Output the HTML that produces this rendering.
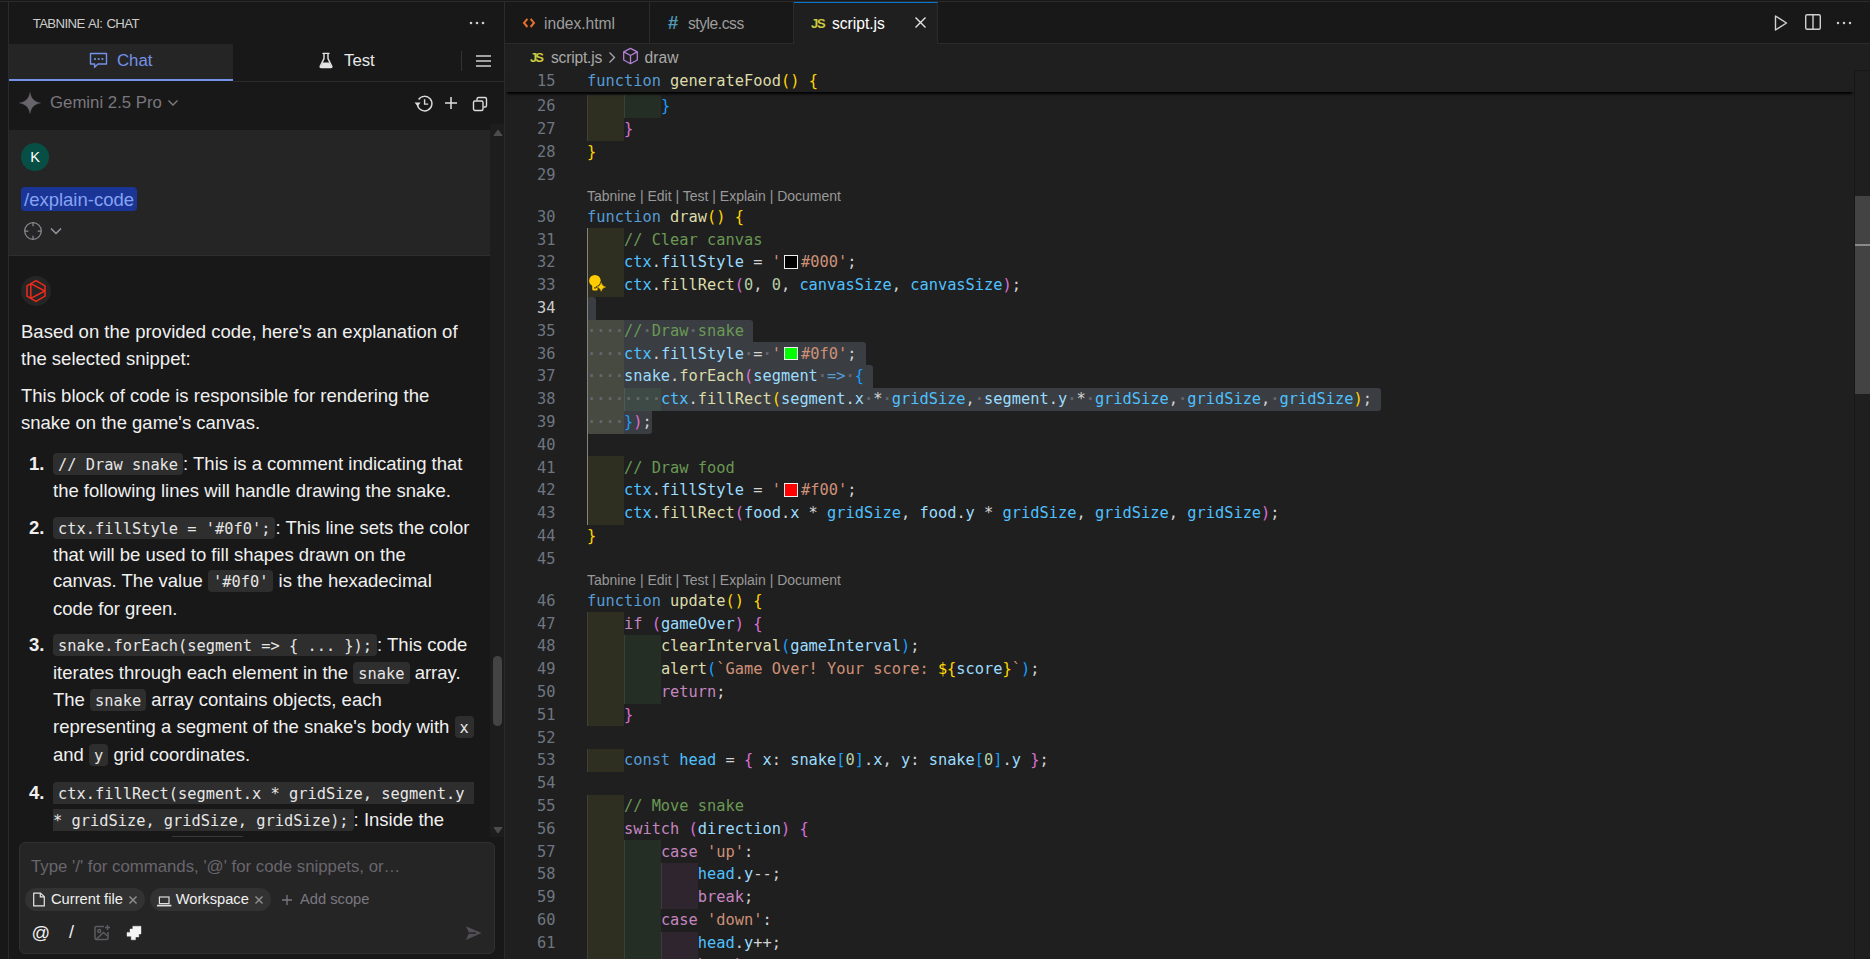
<!DOCTYPE html>
<html lang="en">
<head>
<meta charset="utf-8">
<title>script.js - Tabnine AI Chat</title>
<style>
*{box-sizing:border-box;margin:0;padding:0}
html,body{width:1870px;height:959px;overflow:hidden;background:#181818}
body{position:relative;font-family:"Liberation Sans",sans-serif;color:#ccc}
.abs{position:absolute}
/* ---------- frame ---------- */
#topline{left:0;top:1px;width:1870px;height:1px;background:#2b2b2b}
#strip{left:0;top:2px;width:8px;height:957px;background:#181818}
#stripb{left:8px;top:2px;width:1px;height:957px;background:#2b2b2b}
#side{left:9px;top:2px;width:495px;height:957px;background:#181818}
#sideb{left:504px;top:2px;width:1px;height:957px;background:#2b2b2b}
/* ---------- side header ---------- */
#ttl{left:32.7px;top:16px;font-size:13.2px;line-height:16px;color:#ccc;letter-spacing:-0.6px;word-spacing:1px;white-space:pre}
/* tabs */
#chattab{left:9px;top:44px;width:224px;height:35px;background:#252526}
#chatul{left:9px;top:78.8px;width:224px;height:2.4px;background:#7591e8}
#tabline{left:233px;top:81px;width:271px;height:1px;background:#2b2b2b}
.tabtx{font-size:16.8px;line-height:20px;white-space:pre}
#vsep{left:461px;top:51px;width:1px;height:20px;background:#333}
/* model row */
#model{left:50px;top:93px;font-size:16.8px;line-height:20px;color:#7a777e;white-space:pre}
/* user msg */
#umsg{left:9px;top:130px;width:481px;height:125px;background:#252526}
#umsgb{left:9px;top:255px;width:481px;height:1px;background:#2e2e2e}
#avatar{left:21px;top:143px;width:28px;height:28px;border-radius:50%;background:#074f44;color:#fff;font-size:14.6px;line-height:28px;text-align:center}
#cmd{left:21px;top:187px;width:116px;height:24px;border-radius:4px;background:#1a3596}
#cmdt{left:24px;top:188px;font-size:18.5px;line-height:24px;color:#86a3f3;white-space:pre}
/* bot msg */
#boticon{left:21px;top:276px;width:30px;height:30px;border-radius:50%;background:#252526}
.tx{position:absolute;font-size:18.5px;line-height:27px;color:#f0f0f0;white-space:pre;height:27px}
.tx b{font-weight:700}
.tx code{font-family:"DejaVu Sans Mono","Liberation Mono",monospace;font-size:15.35px;background:#2e2e2e;border-radius:4px;padding:2.6px 5px 1.4px 5px;color:#e6e6e6;letter-spacing:0}
/* chat scrollbar */
#csb{left:490px;top:124px;width:14px;height:713px;background:#1d1d1d}
#cthumb{left:493px;top:655.5px;width:9px;height:70px;border-radius:4.5px;background:#444}
/* input */
#inp{left:19px;top:842px;width:476px;height:112px;border:1px solid #303030;border-radius:6px;background:#252526}
#ph{left:31px;top:857px;font-size:16.8px;line-height:20px;color:#69666d;white-space:pre}
.chip{position:absolute;top:887.7px;height:23.4px;border-radius:12px;background:#323232}
.chiptx{position:absolute;font-size:14.7px;line-height:18px;color:#f0f0f0;white-space:pre;top:890.3px}
/* ---------- editor ---------- */
#edbg{left:505px;top:2px;width:1365px;height:957px;background:#1f1f1f}
#tabbar{left:505px;top:2px;width:1365px;height:42px;background:#181818}
#tabbarb{left:505px;top:43px;width:1365px;height:1px;background:#2b2b2b}
.tab{position:absolute;top:2px;height:41px;border-right:1px solid #2b2b2b;background:#181818}
.tab.on{background:#1f1f1f;border-top:1px solid #0078d4;height:42px}
.tabl{position:absolute;font-family:"Liberation Sans",sans-serif;font-size:15.6px;line-height:20px;white-space:pre;top:14px}
#bc{left:505px;top:44px;width:1349px;height:25px;background:#1f1f1f}
.bct{position:absolute;font-size:15.6px;line-height:20px;color:#a9a9a9;white-space:pre;top:48px}
#sticky{left:505px;top:69px;width:1349px;height:23.4px;background:#1f1f1f;z-index:5;box-shadow:0 4.8px 2.4px -2.4px #000}
#stickysh{left:505px;top:92px;width:1349px;height:3px;background:linear-gradient(#000,#0a0a0a 50%,rgba(0,0,0,0));z-index:5}
.ln{position:absolute;left:505px;width:50.5px;text-align:right;font-family:"DejaVu Sans Mono","Liberation Mono",monospace;font-size:15.35px;line-height:22.8px;height:22.8px;color:#6e7681;white-space:pre;letter-spacing:-0.004px}
.ln.act{color:#ccc}
.cl{position:absolute;left:587px;font-family:"DejaVu Sans Mono","Liberation Mono",monospace;font-size:15.35px;line-height:22.8px;height:22.8px;white-space:pre;color:#d4d4d4;letter-spacing:-0.004px}
.ir{position:absolute;width:37px;height:22.8px;border-left:1px solid rgba(255,255,255,.09)}
.k{color:#569cd6}.f{color:#dcdcaa}.v{color:#9cdcfe}.c{color:#4fc1ff}.s{color:#ce9178}.n{color:#b5cea8}
.m{color:#6a9955}.p{color:#c586c0}.o{color:#d4d4d4}.b1{color:#ffd700}.b2{color:#da70d6}.b3{color:#179fff}
.ws{color:#63666a;font-weight:700}
.sw{display:inline-block;width:13.4px;height:13.4px;border:1.6px solid #eee;margin:0 3.4px 0 3.4px;vertical-align:-1.5px}
.lens{position:absolute;left:587px;font-family:"Liberation Sans",sans-serif;font-size:14px;line-height:19.2px;height:19.2px;color:#999;white-space:pre}
.sel{position:absolute;background:#3a3d41;height:22.8px}
#guide{left:587px;top:228px;width:1px;height:297px;background:#84847a}
.gd{position:absolute;width:1px;background:#404040;left:587px}
/* editor scrollbar */
#vsb{left:1854px;top:70px;width:16px;height:889px;background:#1f1f1f;border-left:1px solid #171717;border-top:1px solid #171717}
#vthumb{left:1855px;top:196px;width:15px;height:198px;background:#434343}
#vmark{left:1855px;top:244px;width:15px;height:2px;background:#8a8a8a}
</style>
</head>
<body>
<div class="abs" id="topline"></div>
<div class="abs" id="strip"></div><div class="abs" id="stripb"></div>
<div class="abs" id="side"></div><div class="abs" id="sideb"></div>

<!-- ===== side panel header ===== -->
<div class="abs" id="ttl">TABNINE AI: CHAT</div>
<svg class="abs" style="left:468px;top:15px" width="18" height="16" viewBox="0 0 18 16"><circle cx="3" cy="8" r="1.3" fill="#ccc"/><circle cx="9" cy="8" r="1.3" fill="#ccc"/><circle cx="15" cy="8" r="1.3" fill="#ccc"/></svg>

<div class="abs" id="chattab"></div><div class="abs" id="chatul"></div><div class="abs" id="tabline"></div>
<svg class="abs" style="left:89px;top:52px" width="20" height="18" viewBox="0 0 20 18"><path d="M1.5 1.5h16v10.5h-8.5l-3.4 3.3v-3.3h-4.1z" fill="none" stroke="#7591e8" stroke-width="1.4" stroke-linejoin="round"/><circle cx="6" cy="7" r="1.1" fill="#7591e8"/><circle cx="9.7" cy="7" r="1.1" fill="#7591e8"/><circle cx="13.4" cy="7" r="1.1" fill="#7591e8"/></svg>
<div class="abs tabtx" id="chatt" style="left:117px;top:51px;color:#7591e8">Chat</div>
<svg class="abs" style="left:318px;top:52px" width="16" height="17" viewBox="0 0 16 18" preserveAspectRatio="none"><path d="M5 1.5h6M6 1.5v5.5L2.2 15q-.5 1.5 1 1.5h9.6q1.5 0 1-1.5L10 7V1.5" fill="none" stroke="#e4e4e4" stroke-width="1.4" stroke-linejoin="round" stroke-linecap="round"/><path d="M4.6 11h6.8l2.2 5H2.4z" fill="#e4e4e4"/></svg>
<div class="abs tabtx" id="testt" style="left:344px;top:51px;color:#e8e8e8">Test</div>
<div class="abs" id="vsep"></div>
<svg class="abs" style="left:475px;top:54px" width="17" height="14" viewBox="0 0 17 14"><path d="M1 2h15M1 7h15M1 12h15" stroke="#d0d0d0" stroke-width="1.4" fill="none"/></svg>

<!-- model row -->
<svg class="abs" style="left:18.6px;top:92px" width="22" height="22" viewBox="0 0 22 22"><path d="M11 .3C12.1 6.7 15.3 9.9 21.7 11C15.3 12.1 12.1 15.3 11 21.7C9.900 15.3 6.7 12.1 .3 11C6.7 9.900 9.900 6.7 11 .3Z" fill="#67646c" stroke="#67646c" stroke-width=".3"/></svg>
<div class="abs" id="model">Gemini 2.5 Pro</div>
<svg class="abs" style="left:167px;top:98px" width="12" height="10" viewBox="0 0 12 10"><path d="M1.5 2.5L6 7l4.5-4.5" fill="none" stroke="#7d7d7d" stroke-width="1.4"/></svg>
<svg class="abs" style="left:414px;top:93.5px" width="21" height="20" viewBox="0 0 21 20"><path d="M4.6 5.5A7.3 7.3 0 1 1 3.5 11.2" fill="none" stroke="#dcdcdc" stroke-width="1.4"/><path d="M.6 8.4L3.6 12.4L6.6 8.6z" fill="#dcdcdc"/><path d="M10.6 5.3V10.1h3.6" fill="none" stroke="#dcdcdc" stroke-width="1.4"/></svg>
<svg class="abs" style="left:444px;top:96px" width="14" height="14" viewBox="0 0 14 14"><path d="M7 1v12M1 7h12" stroke="#e0e0e0" stroke-width="1.5" fill="none"/></svg>
<svg class="abs" style="left:472px;top:95.5px" width="17" height="16" viewBox="0 0 17 16"><rect x="1.5" y="5" width="9.5" height="9.5" rx="1.5" fill="none" stroke="#dcdcdc" stroke-width="1.4"/><path d="M5 4.5V3q0-1.5 1.5-1.5H13q1.5 0 1.5 1.5v6.5q0 1.5-1.5 1.5h-1.5" fill="none" stroke="#dcdcdc" stroke-width="1.4"/></svg>

<!-- user message -->
<div class="abs" id="umsg"></div><div class="abs" id="umsgb"></div>
<div class="abs" id="avatar">K</div>
<div class="abs" id="cmd"></div><div class="abs" id="cmdt">/explain-code</div>
<svg class="abs" style="left:22.8px;top:221px" width="20" height="20" viewBox="0 0 20 20"><circle cx="10" cy="10" r="8.3" fill="none" stroke="#8b8790" stroke-width="1.25"/><path d="M10 1.7v3.6M10 14.7v3.6M1.7 10h3.6M14.7 10h3.6" stroke="#8b8790" stroke-width="1.25"/></svg>
<svg class="abs" style="left:49px;top:226px" width="14" height="10" viewBox="0 0 14 10"><path d="M2 2.5L7 7.5l5-5" fill="none" stroke="#9a979e" stroke-width="1.5"/></svg>

<!-- bot message -->
<div class="abs" id="boticon"></div>
<svg class="abs" style="left:24px;top:279px" width="24" height="24" viewBox="0 0 24 24"><path d="M12 1.6L21 6.8V17.2L12 22.4L3 17.2V6.8Z" fill="none" stroke="#ee2a1b" stroke-width="1.5" stroke-linejoin="round"/><path d="M6.8 4.7V19.3L20.8 12Z" fill="none" stroke="#ee2a1b" stroke-width="1.5" stroke-linejoin="round"/></svg>

<div class="tx" style="left:21px;top:318px">Based on the provided code, here's an explanation of</div>
<div class="tx" style="left:21px;top:345px">the selected snippet:</div>
<div class="tx" style="left:21px;top:382px">This block of code is responsible for rendering the</div>
<div class="tx" style="left:21px;top:409px">snake on the game's canvas.</div>

<div class="tx" style="left:29px;top:450px"><b>1.</b></div>
<div class="tx" style="left:53px;top:450px"><code>// Draw snake</code>: This is a comment indicating that</div>
<div class="tx" style="left:53px;top:477px">the following lines will handle drawing the snake.</div>

<div class="tx" style="left:29px;top:514px"><b>2.</b></div>
<div class="tx" style="left:53px;top:514px"><code>ctx.fillStyle = '#0f0';</code>: This line sets the color</div>
<div class="tx" style="left:53px;top:541px">that will be used to fill shapes drawn on the</div>
<div class="tx" style="left:53px;top:567px">canvas. The value <code>'#0f0'</code> is the hexadecimal</div>
<div class="tx" style="left:53px;top:595px">code for green.</div>

<div class="tx" style="left:29px;top:631px"><b>3.</b></div>
<div class="tx" style="left:53px;top:631px"><code>snake.forEach(segment =&gt; { ... });</code>: This code</div>
<div class="tx" style="left:53px;top:659px">iterates through each element in the <code>snake</code> array.</div>
<div class="tx" style="left:53px;top:686px">The <code>snake</code> array contains objects, each</div>
<div class="tx" style="left:53px;top:713px">representing a segment of the snake's body with <code>x</code></div>
<div class="tx" style="left:53px;top:741px">and <code>y</code> grid coordinates.</div>

<div class="tx" style="left:29px;top:779px"><b>4.</b></div>
<div class="tx" style="left:53px;top:779px"><code style="border-radius:4px 0 0 0;padding-right:0">ctx.fillRect(segment.x * gridSize, segment.y </code></div>
<div class="tx" style="left:53px;top:806px"><code style="border-radius:0 0 4px 0;padding-left:0">* gridSize, gridSize, gridSize);</code>: Inside the</div>

<!-- mask below chat scroll area -->
<div class="abs" style="left:9px;top:833px;width:481px;height:126px;background:#181818"></div>
<div class="abs" style="left:172px;top:836px;width:71px;height:1px;background:#3a3a3a"></div>

<!-- chat scrollbar -->
<div class="abs" id="csb"></div>
<div class="abs" id="cthumb"></div>
<svg class="abs" style="left:492.5px;top:129px" width="10" height="8" viewBox="0 0 10 8"><path d="M5 1L9 6.5H1z" fill="#4c4c4c" stroke="#4c4c4c" stroke-width="1" stroke-linejoin="round"/></svg>
<svg class="abs" style="left:492.5px;top:825.5px" width="10" height="8" viewBox="0 0 10 8"><path d="M5 7L9 1.5H1z" fill="#4c4c4c" stroke="#4c4c4c" stroke-width="1" stroke-linejoin="round"/></svg>

<!-- input box -->
<div class="abs" id="inp"></div>
<div class="abs" id="ph">Type '/' for commands, '@' for code snippets, or…</div>
<div class="chip" style="left:25px;width:119.7px"></div>
<svg class="abs" style="left:32px;top:892px" width="14" height="15" viewBox="0 0 14 16" preserveAspectRatio="none"><path d="M1.7 1.2h6.8l3.8 3.8v9.8H1.7z" fill="none" stroke="#e6e6e6" stroke-width="1.2" stroke-linejoin="round"/><path d="M8.3 1.4v3.8h3.8" fill="none" stroke="#e6e6e6" stroke-width="1.2"/></svg>
<div class="chiptx" style="left:51px">Current file</div>
<svg class="abs" style="left:128px;top:895px" width="10" height="10" viewBox="0 0 10 10"><path d="M1.5 1.5l7 7M8.5 1.5l-7 7" stroke="#8c8c8c" stroke-width="1.5" fill="none"/></svg>
<div class="chip" style="left:149.5px;width:121.5px"></div>
<svg class="abs" style="left:155.5px;top:893.5px" width="17" height="14" viewBox="0 0 17 14"><rect x="3.4" y="3" width="9.6" height="6.6" fill="none" stroke="#dedede" stroke-width="1.2"/><path d="M1 11.6h14.4" stroke="#dedede" stroke-width="1.7" fill="none"/></svg>
<div class="chiptx" style="left:175.7px">Workspace</div>
<svg class="abs" style="left:254px;top:895px" width="10" height="10" viewBox="0 0 10 10"><path d="M1.5 1.5l7 7M8.5 1.5l-7 7" stroke="#8c8c8c" stroke-width="1.5" fill="none"/></svg>
<svg class="abs" style="left:281px;top:894px" width="12" height="12" viewBox="0 0 12 12"><path d="M6 1v10M1 6h10" stroke="#7b7880" stroke-width="1.3" fill="none"/></svg>
<div class="chiptx" style="left:300px;color:#7b7880">Add scope</div>

<div class="abs" style="left:31.5px;top:920px;font-size:18.3px;line-height:26px;color:#f0f0f0">@</div>
<div class="abs" style="left:69px;top:920px;font-size:18px;line-height:24px;color:#f0f0f0">/</div>
<svg class="abs" style="left:93px;top:924px" width="18" height="18" viewBox="0 0 18 18"><path d="M11 2.5H3.5q-1.5 0-1.5 1.5v10q0 1.5 1.5 1.5h10q1.5 0 1.5-1.5V8" fill="none" stroke="#5e5b62" stroke-width="1.5"/><circle cx="6.2" cy="7" r="1.5" fill="none" stroke="#5e5b62" stroke-width="1.4"/><path d="M3.5 15l7-6.5 4 3.5" fill="none" stroke="#5e5b62" stroke-width="1.5"/><path d="M14.5 1v5M12 3.5h5" stroke="#5e5b62" stroke-width="1.5"/></svg>
<svg class="abs" style="left:126px;top:925px" width="17" height="16" viewBox="0 0 17 16"><path d="M6.8 1.2h8.2v7.8h-2.2v3H9.5v2.8H5.2v-3.5H1V7.4h3V4h2.8z" fill="#f4f4f4" stroke="#f4f4f4" stroke-width=".4" stroke-linejoin="round"/></svg>
<svg class="abs" style="left:465px;top:925px" width="18" height="16" viewBox="0 0 18 16"><path d="M.8 1.2L16.6 8.1L.8 15L4.2 8.1z" fill="#514f55"/><path d="M4.2 8.1H11" stroke="#252526" stroke-width="1.5"/></svg>

<!-- ===== editor ===== -->
<div class="abs" id="edbg"></div>
<div class="abs" id="tabbar"></div><div class="abs" id="tabbarb"></div>
<div class="tab" style="left:505px;width:145px"></div>
<div class="tab" style="left:650px;width:144px"></div>
<div class="tab on" style="left:794px;width:144px"></div>
<svg class="abs" style="left:522px;top:16px" width="14" height="14" viewBox="0 0 14 14"><path d="M5.4 2.8L2 6.9l3.4 4.1M8.6 2.8L12 6.9l-3.4 4.1" fill="none" stroke="#e8702a" stroke-width="2"/></svg>
<div class="tabl" style="left:544px;color:#9d9d9d">index.html</div>
<div class="tabl" style="left:668px;color:#519aba;font-weight:700;font-size:18.5px;top:13px">#</div>
<div class="tabl" style="left:688px;color:#9d9d9d;letter-spacing:-0.45px">style.css</div>
<div class="tabl" style="left:811px;color:#cbcb41;font-weight:700;font-size:13px;letter-spacing:-1.2px;top:13.5px">JS</div>
<div class="tabl" style="left:832px;color:#fff">script.js</div>
<svg class="abs" style="left:914px;top:16px" width="13" height="13" viewBox="0 0 13 13"><path d="M1.5 1.5l10 10M11.5 1.5l-10 10" stroke="#e6e6e6" stroke-width="1.4" fill="none"/></svg>
<!-- editor actions -->
<svg class="abs" style="left:1773px;top:14px" width="16" height="18" viewBox="0 0 16 18"><path d="M2.5 2L13.5 9L2.5 16Z" fill="none" stroke="#d0d0d0" stroke-width="1.4" stroke-linejoin="round"/></svg>
<svg class="abs" style="left:1804px;top:13px" width="18" height="18" viewBox="0 0 18 18"><rect x="1.7" y="1.7" width="14.6" height="14.6" rx="1.5" fill="none" stroke="#d0d0d0" stroke-width="1.4"/><path d="M9 1.7v14.6" stroke="#d0d0d0" stroke-width="1.4"/></svg>
<svg class="abs" style="left:1834.5px;top:14.5px" width="18" height="16" viewBox="0 0 18 16"><circle cx="3" cy="8" r="1.25" fill="#ccc"/><circle cx="9" cy="8" r="1.25" fill="#ccc"/><circle cx="15" cy="8" r="1.25" fill="#ccc"/></svg>

<!-- breadcrumbs -->
<div class="abs" id="bc"></div>
<div class="bct" style="left:530px;color:#cbcb41;font-weight:700;font-size:13px;letter-spacing:-1.9px;top:47.5px">JS</div>
<div class="bct" style="left:551px;letter-spacing:-0.2px">script.js</div>
<svg class="abs" style="left:607px;top:51px" width="10" height="13" viewBox="0 0 10 13"><path d="M2.5 1.5L7.5 6.5l-5 5" fill="none" stroke="#a9a9a9" stroke-width="1.3"/></svg>
<svg class="abs" style="left:622.3px;top:47.3px" width="17" height="18" viewBox="0 0 17 18"><path d="M8.5 1.3L15.3 4.8V13L8.5 16.7L1.7 13V4.8Z M1.9 4.9L8.5 8.5L15.1 4.9M8.5 8.5v8" fill="none" stroke="#b180d7" stroke-width="1.3" stroke-linejoin="round"/></svg>
<div class="bct" style="left:644.6px">draw</div>

<!-- code -->
<div class="sel" style="top:296.8px;left:587px;width:9.2px;border-radius:3px 3px 0px 0px"></div>
<div class="sel" style="top:319.6px;left:587px;width:166.3px;border-radius:0px 3px 0px 0px"></div>
<div class="sel" style="top:342.4px;left:587px;width:278.8px;border-radius:0px 3px 0px 0px"></div>
<div class="sel" style="top:365.2px;left:587px;width:286.3px;border-radius:0px 3px 0px 0px"></div>
<div class="sel" style="top:388.0px;left:587px;width:794.3px;border-radius:0px 3px 3px 0px"></div>
<div class="sel" style="top:410.8px;left:587px;width:64.7px;border-radius:0px 0px 3px 3px"></div>
<div class="ir" style="top:95.2px;left:587px;background:rgba(255,255,64,0.07)"></div>
<div class="ir" style="top:95.2px;left:624px;background:rgba(127,255,127,0.07)"></div>
<div class="ir" style="top:118.0px;left:587px;background:rgba(255,255,64,0.07)"></div>
<div class="ir" style="top:228.4px;left:587px;background:rgba(255,255,64,0.07)"></div>
<div class="ir" style="top:251.2px;left:587px;background:rgba(255,255,64,0.07)"></div>
<div class="ir" style="top:274.0px;left:587px;background:rgba(255,255,64,0.07)"></div>
<div class="ir" style="top:319.6px;left:587px;background:rgba(255,255,64,0.07)"></div>
<div class="ir" style="top:342.4px;left:587px;background:rgba(255,255,64,0.07)"></div>
<div class="ir" style="top:365.2px;left:587px;background:rgba(255,255,64,0.07)"></div>
<div class="ir" style="top:388.0px;left:587px;background:rgba(255,255,64,0.07)"></div>
<div class="ir" style="top:388.0px;left:624px;background:rgba(127,255,127,0.07)"></div>
<div class="ir" style="top:410.8px;left:587px;background:rgba(255,255,64,0.07)"></div>
<div class="ir" style="top:456.4px;left:587px;background:rgba(255,255,64,0.07)"></div>
<div class="ir" style="top:479.2px;left:587px;background:rgba(255,255,64,0.07)"></div>
<div class="ir" style="top:502.0px;left:587px;background:rgba(255,255,64,0.07)"></div>
<div class="ir" style="top:612.4px;left:587px;background:rgba(255,255,64,0.07)"></div>
<div class="ir" style="top:635.2px;left:587px;background:rgba(255,255,64,0.07)"></div>
<div class="ir" style="top:635.2px;left:624px;background:rgba(127,255,127,0.07)"></div>
<div class="ir" style="top:658.0px;left:587px;background:rgba(255,255,64,0.07)"></div>
<div class="ir" style="top:658.0px;left:624px;background:rgba(127,255,127,0.07)"></div>
<div class="ir" style="top:680.8px;left:587px;background:rgba(255,255,64,0.07)"></div>
<div class="ir" style="top:680.8px;left:624px;background:rgba(127,255,127,0.07)"></div>
<div class="ir" style="top:703.6px;left:587px;background:rgba(255,255,64,0.07)"></div>
<div class="ir" style="top:749.2px;left:587px;background:rgba(255,255,64,0.07)"></div>
<div class="ir" style="top:794.8px;left:587px;background:rgba(255,255,64,0.07)"></div>
<div class="ir" style="top:817.6px;left:587px;background:rgba(255,255,64,0.07)"></div>
<div class="ir" style="top:840.4px;left:587px;background:rgba(255,255,64,0.07)"></div>
<div class="ir" style="top:840.4px;left:624px;background:rgba(127,255,127,0.07)"></div>
<div class="ir" style="top:863.2px;left:587px;background:rgba(255,255,64,0.07)"></div>
<div class="ir" style="top:863.2px;left:624px;background:rgba(127,255,127,0.07)"></div>
<div class="ir" style="top:863.2px;left:661px;background:rgba(255,127,255,0.07)"></div>
<div class="ir" style="top:886.0px;left:587px;background:rgba(255,255,64,0.07)"></div>
<div class="ir" style="top:886.0px;left:624px;background:rgba(127,255,127,0.07)"></div>
<div class="ir" style="top:886.0px;left:661px;background:rgba(255,127,255,0.07)"></div>
<div class="ir" style="top:908.8px;left:587px;background:rgba(255,255,64,0.07)"></div>
<div class="ir" style="top:908.8px;left:624px;background:rgba(127,255,127,0.07)"></div>
<div class="ir" style="top:931.6px;left:587px;background:rgba(255,255,64,0.07)"></div>
<div class="ir" style="top:931.6px;left:624px;background:rgba(127,255,127,0.07)"></div>
<div class="ir" style="top:931.6px;left:661px;background:rgba(255,127,255,0.07)"></div>
<div class="ir" style="top:954.4px;left:587px;background:rgba(255,255,64,0.07)"></div>
<div class="ir" style="top:954.4px;left:624px;background:rgba(127,255,127,0.07)"></div>
<div class="ir" style="top:954.4px;left:661px;background:rgba(255,127,255,0.07)"></div>
<div class="ln" style="top:95.3px">26</div>
<div class="cl" style="top:95.3px"><span class="o">        </span><span class="b3">}</span></div>
<div class="ln" style="top:118.1px">27</div>
<div class="cl" style="top:118.1px"><span class="o">    </span><span class="b2">}</span></div>
<div class="ln" style="top:140.9px">28</div>
<div class="cl" style="top:140.9px"><span class="b1">}</span></div>
<div class="ln" style="top:163.7px">29</div>
<div class="ln" style="top:205.7px">30</div>
<div class="cl" style="top:205.7px"><span class="k">function</span><span class="o"> </span><span class="f">draw</span><span class="b1">()</span><span class="o"> </span><span class="b1">{</span></div>
<div class="ln" style="top:228.5px">31</div>
<div class="cl" style="top:228.5px"><span class="o">    </span><span class="m">// Clear canvas</span></div>
<div class="ln" style="top:251.3px">32</div>
<div class="cl" style="top:251.3px"><span class="o">    </span><span class="c">ctx</span><span class="o">.</span><span class="v">fillStyle</span><span class="o"> = </span><span class="s">&#x27;</span><i class="sw" style="background:#000000"></i><span class="s">#000&#x27;</span><span class="o">;</span></div>
<div class="ln" style="top:274.1px">33</div>
<div class="cl" style="top:274.1px"><span class="o">    </span><span class="c">ctx</span><span class="o">.</span><span class="f">fillRect</span><span class="b2">(</span><span class="n">0</span><span class="o">, </span><span class="n">0</span><span class="o">, </span><span class="c">canvasSize</span><span class="o">, </span><span class="c">canvasSize</span><span class="b2">)</span><span class="o">;</span></div>
<div class="ln act" style="top:296.9px">34</div>
<div class="ln" style="top:319.7px">35</div>
<div class="cl" style="top:319.7px"><span class="ws">····</span><span class="m">//</span><span class="ws">·</span><span class="m">Draw</span><span class="ws">·</span><span class="m">snake</span></div>
<div class="ln" style="top:342.5px">36</div>
<div class="cl" style="top:342.5px"><span class="ws">····</span><span class="c">ctx</span><span class="o">.</span><span class="v">fillStyle</span><span class="ws">·</span><span class="o">=</span><span class="ws">·</span><span class="s">&#x27;</span><i class="sw" style="background:#00ff00"></i><span class="s">#0f0&#x27;</span><span class="o">;</span></div>
<div class="ln" style="top:365.3px">37</div>
<div class="cl" style="top:365.3px"><span class="ws">····</span><span class="v">snake</span><span class="o">.</span><span class="f">forEach</span><span class="b2">(</span><span class="v">segment</span><span class="ws">·</span><span class="k">=&gt;</span><span class="ws">·</span><span class="b3">{</span></div>
<div class="ln" style="top:388.1px">38</div>
<div class="cl" style="top:388.1px"><span class="ws">········</span><span class="c">ctx</span><span class="o">.</span><span class="f">fillRect</span><span class="b1">(</span><span class="v">segment</span><span class="o">.</span><span class="v">x</span><span class="ws">·</span><span class="o">*</span><span class="ws">·</span><span class="c">gridSize</span><span class="o">,</span><span class="ws">·</span><span class="v">segment</span><span class="o">.</span><span class="v">y</span><span class="ws">·</span><span class="o">*</span><span class="ws">·</span><span class="c">gridSize</span><span class="o">,</span><span class="ws">·</span><span class="c">gridSize</span><span class="o">,</span><span class="ws">·</span><span class="c">gridSize</span><span class="b1">)</span><span class="o">;</span></div>
<div class="ln" style="top:410.9px">39</div>
<div class="cl" style="top:410.9px"><span class="ws">····</span><span class="b3">}</span><span class="b2">)</span><span class="o">;</span></div>
<div class="ln" style="top:433.7px">40</div>
<div class="ln" style="top:456.5px">41</div>
<div class="cl" style="top:456.5px"><span class="o">    </span><span class="m">// Draw food</span></div>
<div class="ln" style="top:479.3px">42</div>
<div class="cl" style="top:479.3px"><span class="o">    </span><span class="c">ctx</span><span class="o">.</span><span class="v">fillStyle</span><span class="o"> = </span><span class="s">&#x27;</span><i class="sw" style="background:#ff0000"></i><span class="s">#f00&#x27;</span><span class="o">;</span></div>
<div class="ln" style="top:502.1px">43</div>
<div class="cl" style="top:502.1px"><span class="o">    </span><span class="c">ctx</span><span class="o">.</span><span class="f">fillRect</span><span class="b2">(</span><span class="v">food</span><span class="o">.</span><span class="v">x</span><span class="o"> * </span><span class="c">gridSize</span><span class="o">, </span><span class="v">food</span><span class="o">.</span><span class="v">y</span><span class="o"> * </span><span class="c">gridSize</span><span class="o">, </span><span class="c">gridSize</span><span class="o">, </span><span class="c">gridSize</span><span class="b2">)</span><span class="o">;</span></div>
<div class="ln" style="top:524.9px">44</div>
<div class="cl" style="top:524.9px"><span class="b1">}</span></div>
<div class="ln" style="top:547.7px">45</div>
<div class="ln" style="top:589.7px">46</div>
<div class="cl" style="top:589.7px"><span class="k">function</span><span class="o"> </span><span class="f">update</span><span class="b1">()</span><span class="o"> </span><span class="b1">{</span></div>
<div class="ln" style="top:612.5px">47</div>
<div class="cl" style="top:612.5px"><span class="o">    </span><span class="p">if</span><span class="o"> </span><span class="b2">(</span><span class="v">gameOver</span><span class="b2">)</span><span class="o"> </span><span class="b2">{</span></div>
<div class="ln" style="top:635.3px">48</div>
<div class="cl" style="top:635.3px"><span class="o">        </span><span class="f">clearInterval</span><span class="b3">(</span><span class="v">gameInterval</span><span class="b3">)</span><span class="o">;</span></div>
<div class="ln" style="top:658.1px">49</div>
<div class="cl" style="top:658.1px"><span class="o">        </span><span class="f">alert</span><span class="b3">(</span><span class="s">`Game Over! Your score: </span><span class="b1">${</span><span class="v">score</span><span class="b1">}</span><span class="s">`</span><span class="b3">)</span><span class="o">;</span></div>
<div class="ln" style="top:680.9px">50</div>
<div class="cl" style="top:680.9px"><span class="o">        </span><span class="p">return</span><span class="o">;</span></div>
<div class="ln" style="top:703.7px">51</div>
<div class="cl" style="top:703.7px"><span class="o">    </span><span class="b2">}</span></div>
<div class="ln" style="top:726.5px">52</div>
<div class="ln" style="top:749.3px">53</div>
<div class="cl" style="top:749.3px"><span class="o">    </span><span class="k">const</span><span class="o"> </span><span class="c">head</span><span class="o"> = </span><span class="b2">{</span><span class="o"> </span><span class="v">x</span><span class="o">: </span><span class="v">snake</span><span class="b3">[</span><span class="n">0</span><span class="b3">]</span><span class="o">.</span><span class="v">x</span><span class="o">, </span><span class="v">y</span><span class="o">: </span><span class="v">snake</span><span class="b3">[</span><span class="n">0</span><span class="b3">]</span><span class="o">.</span><span class="v">y</span><span class="o"> </span><span class="b2">}</span><span class="o">;</span></div>
<div class="ln" style="top:772.1px">54</div>
<div class="ln" style="top:794.9px">55</div>
<div class="cl" style="top:794.9px"><span class="o">    </span><span class="m">// Move snake</span></div>
<div class="ln" style="top:817.7px">56</div>
<div class="cl" style="top:817.7px"><span class="o">    </span><span class="p">switch</span><span class="o"> </span><span class="b2">(</span><span class="v">direction</span><span class="b2">)</span><span class="o"> </span><span class="b2">{</span></div>
<div class="ln" style="top:840.5px">57</div>
<div class="cl" style="top:840.5px"><span class="o">        </span><span class="p">case</span><span class="o"> </span><span class="s">&#x27;up&#x27;</span><span class="o">:</span></div>
<div class="ln" style="top:863.3px">58</div>
<div class="cl" style="top:863.3px"><span class="o">            </span><span class="c">head</span><span class="o">.</span><span class="v">y</span><span class="o">--;</span></div>
<div class="ln" style="top:886.1px">59</div>
<div class="cl" style="top:886.1px"><span class="o">            </span><span class="p">break</span><span class="o">;</span></div>
<div class="ln" style="top:908.9px">60</div>
<div class="cl" style="top:908.9px"><span class="o">        </span><span class="p">case</span><span class="o"> </span><span class="s">&#x27;down&#x27;</span><span class="o">:</span></div>
<div class="ln" style="top:931.7px">61</div>
<div class="cl" style="top:931.7px"><span class="o">            </span><span class="c">head</span><span class="o">.</span><span class="v">y</span><span class="o">++;</span></div>
<div class="ln" style="top:954.5px">62</div>
<div class="cl" style="top:953.5px"><span class="o">            </span><span class="p">break</span><span class="o">;</span></div>
<div class="lens" style="top:187px">Tabnine | Edit | Test | Explain | Document</div>
<div class="lens" style="top:570.9px">Tabnine | Edit | Test | Explain | Document</div>
<div class="abs" id="guide"></div>

<!-- lightbulb -->
<svg class="abs" style="left:587px;top:274px" width="20" height="20" viewBox="0 0 20 20"><circle cx="7.9" cy="6.7" r="5.8" fill="#ffcc00"/><path d="M5.2 10.5h5.6v4.4q0 1.5-1.5 1.5H6.7q-1.5 0-1.5-1.5z" fill="#ffcc00"/><circle cx="8" cy="13.9" r=".8" fill="#2f2f21"/><path d="M14.2 8.7Q14.9 12.3 18.5 13Q14.9 13.7 14.2 17.3Q13.5 13.7 9.9 13Q13.5 12.3 14.2 8.7Z" fill="#2d2d20" stroke="#2d2d20" stroke-width="1.8" stroke-linejoin="round"/><path d="M14.2 8.7Q14.9 12.3 18.5 13Q14.9 13.7 14.2 17.3Q13.5 13.7 9.9 13Q13.5 12.3 14.2 8.7Z" fill="#ffcc00" stroke="#ffcc00" stroke-width=".5" stroke-linejoin="round"/></svg>

<!-- sticky scroll -->
<div class="abs" id="sticky"></div>
<div class="ln" style="top:70px;z-index:6">15</div>
<div class="cl" style="top:70px;z-index:6"><span class="k">function</span><span class="o"> </span><span class="f">generateFood</span><span class="b1">()</span><span class="o"> </span><span class="b1">{</span></div>

<!-- editor scrollbar -->
<div class="abs" id="vsb"></div><div class="abs" id="vthumb"></div><div class="abs" id="vmark"></div>
</body>
</html>
